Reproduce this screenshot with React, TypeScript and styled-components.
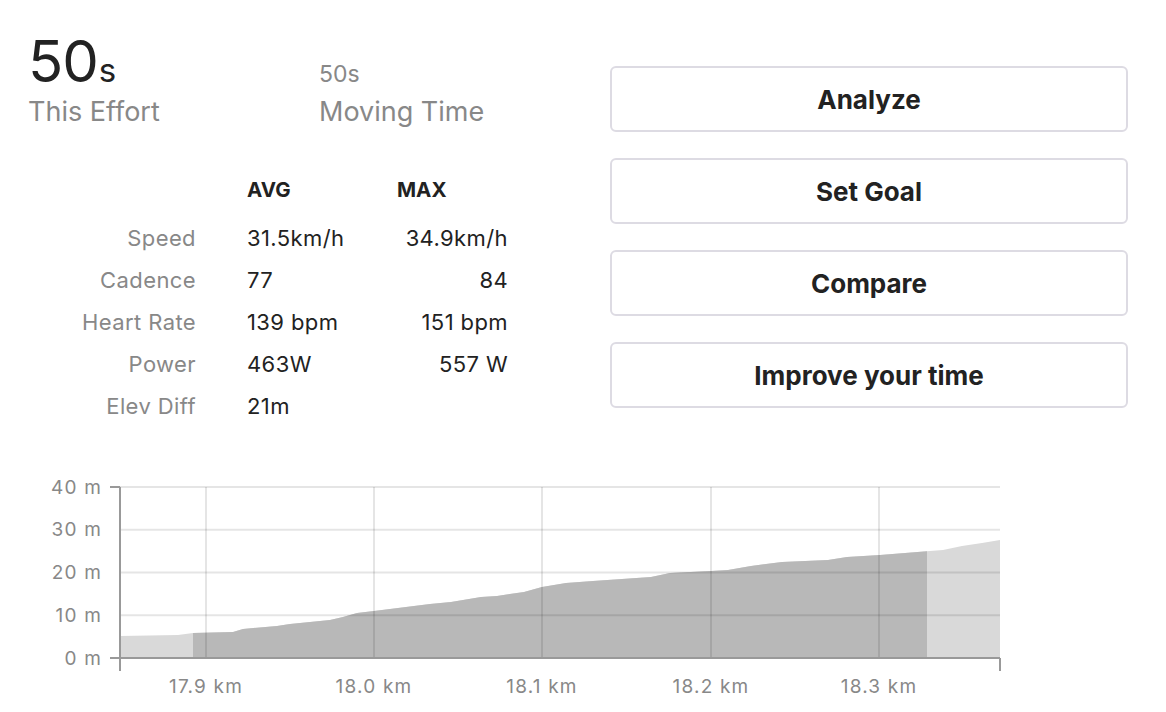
import styled, { createGlobalStyle } from "styled-components"

const GlobalStyle = createGlobalStyle`
  body {
    margin: 0;
    background: #fff;
    font-family: Inter, "Noto Sans", "Liberation Sans", sans-serif;
    color: #222;
  }
`

const rows = [
  { label: "Speed", avg: "31.5km/h", max: "34.9km/h" },
  { label: "Cadence", avg: "77", max: "84" },
  { label: "Heart Rate", avg: "139 bpm", max: "151 bpm" },
  { label: "Power", avg: "463W", max: "557 W" },
  { label: "Elev Diff", avg: "21m", max: "" },
]

const actions = ["Analyze", "Set Goal", "Compare", "Improve your time"]

// page coords of the elevation profile
const profile: [number, number][] = [
  [120, 636], [178, 635], [193, 633], [233, 632], [243, 629], [277, 626],
  [290, 624], [330, 620], [343, 617], [357, 613], [374, 611], [430, 604],
  [451, 602], [481, 597], [497, 596], [524, 592], [542, 587], [566, 583],
  [593, 581], [651, 577], [670, 573], [711, 571], [728, 570], [751, 566],
  [782, 562], [828, 560], [847, 557], [880, 555], [930, 551], [943, 550],
  [962, 546], [982, 543], [1000, 540],
]

const OX = 28
const OY = 470
const left = 120 - OX
const right = 1000 - OX
const top = 487 - OY
const zero = 658 - OY
const yTicks = [40, 30, 20, 10, 0]
const xTicks = [
  { x: 206, label: "17.9 km" },
  { x: 374, label: "18.0 km" },
  { x: 542, label: "18.1 km" },
  { x: 711, label: "18.2 km" },
  { x: 879, label: "18.3 km" },
]

function yFor(m: number) {
  return zero - ((zero - top) * m) / 40
}

function ElevationChart() {
  const pts = profile.map(([x, y]) => `${x - OX},${y - OY}`).join(" L")
  const area = `M${left},${zero} L${pts} L${right},${zero} Z`
  return (
    <ChartSvg width={1000} height={240} viewBox="0 0 1000 240">
      <defs>
        <clipPath id="effort">
          <rect x={193 - OX} y={0} width={927 - 193} height={240} />
        </clipPath>
      </defs>
      <path d={area} fill="#d9d9d9" />
      <path d={area} fill="#b8b8b8" clipPath="url(#effort)" />
      {yTicks.slice(0, 4).map((m) => (
        <line key={m} x1={left} x2={right} y1={yFor(m)} y2={yFor(m)} stroke="rgba(0,0,0,0.1)" strokeWidth={2} />
      ))}
      {xTicks.map((t) => (
        <line key={t.x} x1={t.x - OX} x2={t.x - OX} y1={top} y2={zero} stroke="rgba(0,0,0,0.1)" strokeWidth={2} />
      ))}
      <g stroke="#999" strokeWidth={2}>
        <line x1={left} x2={left} y1={top} y2={zero + 13} />
        <line x1={left - 10} x2={left} y1={top} y2={top} />
        <line x1={left - 10} x2={right} y1={zero} y2={zero} />
        <line x1={right} x2={right} y1={zero} y2={zero + 13} />
      </g>
      {yTicks.map((m) => (
        <AxisText key={m} x={102 - OX} y={yFor(m)} textAnchor="end" dominantBaseline="central">
          {m} m
        </AxisText>
      ))}
      {xTicks.map((t) => (
        <AxisText key={t.x} x={t.x - OX} y={686 - OY} textAnchor="middle" dominantBaseline="central">
          {t.label}
        </AxisText>
      ))}
    </ChartSvg>
  )
}

export default function App() {
  return (
    <Page>
      <GlobalStyle />
      <Top>
        <div>
          <Stats>
            <Stat>
              <BigValue>
                50<small>s</small>
              </BigValue>
              <StatLabel>This Effort</StatLabel>
            </Stat>
            <Stat>
              <SmallValue>50s</SmallValue>
              <StatLabel>Moving Time</StatLabel>
            </Stat>
          </Stats>
          <Table>
            <span />
            <Head>AVG</Head>
            <Head>MAX</Head>
            {rows.map((r) => (
              <Row key={r.label}>
                <RowLabel>{r.label}</RowLabel>
                <Cell>{r.avg}</Cell>
                <Cell $right>{r.max}</Cell>
              </Row>
            ))}
          </Table>
        </div>
        <Actions>
          {actions.map((a) => (
            <ActionButton key={a}>{a}</ActionButton>
          ))}
        </Actions>
      </Top>
      <ElevationChart />
    </Page>
  )
}

const Page = styled.div`
  padding: 31px 0 0 28px;
  width: 1138px;
`

const Top = styled.div`
  display: grid;
  grid-template-columns: 582px 518px;
  align-items: start;
`

const Stats = styled.div`
  display: flex;
  align-items: flex-end;
`

const Stat = styled.div`
  width: 291px;
  display: flex;
  flex-direction: column;
`

const BigValue = styled.div`
  font-size: 58px;
  line-height: 60px;
  color: #222;
  letter-spacing: -1px;

  small {
    font-size: 33px;
    letter-spacing: 0;
    margin-left: 1px;
  }
`

const SmallValue = styled.div`
  font-size: 23px;
  line-height: 33px;
  margin-bottom: 9px;
  color: #888;
`

const StatLabel = styled.div`
  font-size: 27px;
  line-height: 32px;
  margin-top: -4px;
  color: #888;
`

const Table = styled.div`
  display: grid;
  grid-template-columns: 219px 150px 111px;
  margin-top: 41px;
`

const Head = styled.div`
  font-weight: 700;
  font-size: 20.5px;
  line-height: 42px;
  margin-bottom: 6px;
`

const Row = styled.div`
  display: contents;
`

const RowLabel = styled.div`
  text-align: right;
  padding-right: 51px;
  font-size: 22px;
  letter-spacing: 0.4px;
  line-height: 42px;
  color: #888;
`

const Cell = styled.div<{ $right?: boolean }>`
  font-size: 22px;
  letter-spacing: 0.4px;
  line-height: 42px;
  color: #222;
  text-align: ${(p) => (p.$right ? "right" : "left")};
`

const Actions = styled.div`
  display: flex;
  flex-direction: column;
  gap: 26px;
  margin-top: 35px;
`

const ActionButton = styled.button`
  height: 66px;
  border: 2px solid #dddbe3;
  border-radius: 6px;
  background: #fff;
  font-family: inherit;
  font-weight: 700;
  font-size: 26px;
  color: #222;
  cursor: pointer;
`

const ChartSvg = styled.svg`
  display: block;
  margin-top: 43px;
`

const AxisText = styled.text`
  font-family: Inter, "Noto Sans", "Liberation Sans", sans-serif;
  font-size: 19px;
  letter-spacing: 1.2px;
  fill: #888;
`
